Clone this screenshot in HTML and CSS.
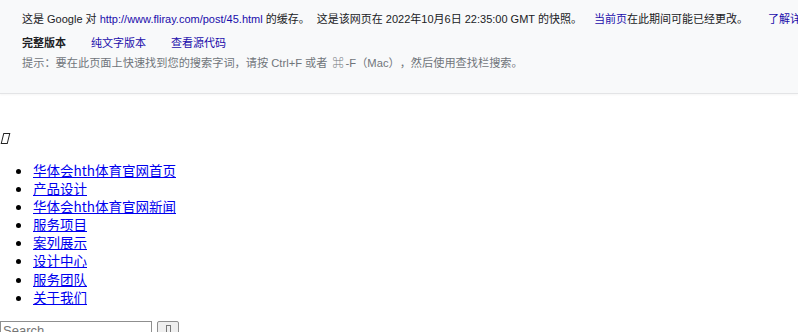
FILE: index.html
```html
<!DOCTYPE html>
<html lang="zh-CN">
<head>
    <meta charset="UTF-8">
    <meta name="viewport" content="width=device-width, initial-scale=1.0">
    <title>华体会hth体育官网</title>
    <link rel="stylesheet" href="styles.css">
</head>
<body>

<div class="cache-hdr">
    <div class="cache-line">
        <span>这是 Google 对 <a href="#">http://www.fliray.com/post/45.html</a> 的缓存。</span>
        <span class="sep">这是该网页在 2022年10月6日 22:35:00 GMT 的快照。</span>
        <span class="sep wide"><a href="#">当前页</a>在此期间可能已经更改。</span>
        <a class="sep more" href="#">了解详情</a>
    </div>
    <div class="cache-line versions">
        <span class="current">完整版本</span>
        <a href="#">纯文字版本</a>
        <a href="#">查看源代码</a>
    </div>
    <div class="cache-line tip">
        提示：要在此页面上快速找到您的搜索字词，请按 <b>Ctrl+F</b> 或者 <b><span class="cmd">⌘</span>-F</b>（Mac），然后使用查找栏搜索。
    </div>
</div>

<div class="site-logo"><span class="tofu"></span></div>

<ul class="nav">
    <li><a href="#">华体会hth体育官网首页</a></li>
    <li><a href="#">产品设计</a></li>
    <li><a href="#">华体会hth体育官网新闻</a></li>
    <li><a href="#">服务项目</a></li>
    <li><a href="#">案列展示</a></li>
    <li><a href="#">设计中心</a></li>
    <li><a href="#">服务团队</a></li>
    <li><a href="#">关于我们</a></li>
</ul>

<form class="search">
    <input type="text" placeholder="Search">
    <button type="button"><span class="tofu small"></span></button>
</form>

</body>
</html>
```

FILE: styles.css
```css
html {
    overflow: hidden;
}
body {
    margin: 0;
    font-family: "Liberation Serif", "Noto Sans CJK SC", serif;
    font-size: 13.5px;
    color: #000;
    background: #fff;
    text-spacing-trim: space-all;
}
.cache-hdr {
    background-color: #f8f9fa;
    border-bottom: 1px solid #e3e4e6;
    box-shadow: 0 1px 2px rgba(0, 0, 0, 0.04);
    padding: 12px 24px 23px 22px;
    font-family: "Liberation Sans", "Noto Sans CJK SC", sans-serif;
    font-size: 11px;
    line-height: 14px;
    color: #202124;
    white-space: nowrap;
}
.cache-hdr a {
    color: #1a0dab;
    text-decoration: none;
}
.cache-line .sep {
    margin-left: 4px;
}
.cache-line .wide {
    margin-left: 9px;
}
.cache-line .more {
    margin-left: 17px;
}
.versions {
    margin-top: 10px;
    display: flex;
    gap: 25px;
}
.versions .current {
    font-weight: bold;
}
.tip {
    margin-top: 6px;
    color: #70757a;
    font-size: 11.2px;
}
.tip b {
    font-weight: normal;
}
.tip .cmd {
    display: inline-block;
    width: 15px;
    text-align: center;
}
.site-logo {
    margin-top: 39px;
    height: 14px;
    line-height: 14px;
}
.tofu {
    display: inline-block;
    width: 5px;
    height: 9px;
    border: 1.5px solid #222;
    transform: skewX(-14deg);
    margin-left: 2px;
}
.tofu.small {
    width: 3px;
    height: 8px;
    border: 1px solid #777;
    transform: none;
    margin: 0;
}
.nav {
    margin: 14px 0 0;
    padding-left: 33px;
    font-family: "Noto Sans CJK SC", "Liberation Sans", sans-serif;
    line-height: 18.1px;
}
.nav a {
    color: #0000ee;
}
.search {
    margin-top: 15px;
    display: flex;
    gap: 5px;
    align-items: flex-start;
}
.search input {
    width: 146px;
    height: 16px;
    margin: 0;
    padding: 1px 2px;
    border: 1px solid #8f8f8f;
    font-family: "Liberation Sans", sans-serif;
    font-size: 13px;
}
.search button {
    width: 22px;
    height: 20px;
    padding: 0;
    border: 1px solid #8f8f8f;
    border-radius: 2px;
    background: #efefef;
}
```
